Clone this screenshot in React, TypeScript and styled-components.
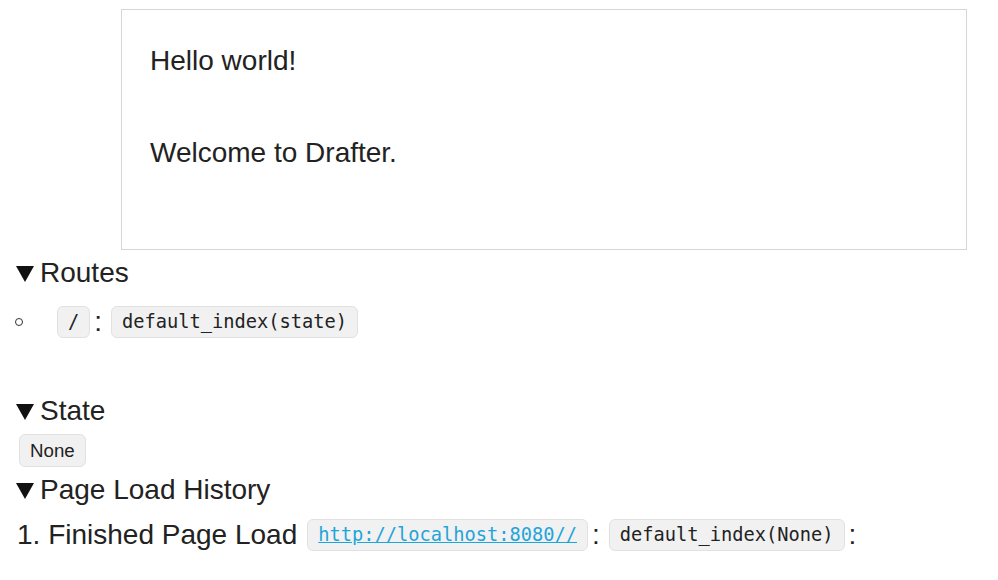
import React from "react";
import styled, { createGlobalStyle } from "styled-components";

const Global = createGlobalStyle`
  html, body { margin: 0; padding: 0; background: #ffffff; }
  body { font-family: "Liberation Sans", Arial, sans-serif; color: #222222; }
`;

const Page = styled.div`
  padding: 9px 31px 0 0;
  display: flex;
  flex-direction: column;
`;

const Frame = styled.div`
  margin-left: 121px;
  height: 241px;
  box-sizing: border-box;
  border: 1px solid #d6d6d6;
  padding: 35px 28px 0 28px;
  display: flex;
  flex-direction: column;
  gap: 60px;
`;

const Para = styled.div`
  font-size: 28px;
  line-height: 32px;
`;

const Summary = styled.div<{ $top: number }>`
  display: flex;
  align-items: center;
  margin-top: ${(p) => p.$top}px;
  margin-left: 16px;
  font-size: 28px;
  line-height: 32px;
  gap: 6px;
`;

const Triangle = styled.span`
  width: 0;
  height: 0;
  border-left: 9px solid transparent;
  border-right: 9px solid transparent;
  border-top: 16px solid #111111;
  margin-top: 2px;
`;

const Row = styled.div<{ $top: number; $left: number }>`
  display: flex;
  align-items: center;
  margin-top: ${(p) => p.$top}px;
  margin-left: ${(p) => p.$left}px;
  font-size: 28px;
  line-height: 32px;
`;

const Bullet = styled.span`
  width: 6px;
  height: 6px;
  border: 1px solid #333333;
  border-radius: 50%;
  margin-right: 34px;
`;

const Code = styled.code`
  font-family: "DejaVu Sans Mono", "Liberation Mono", monospace;
  font-size: 18.7px;
  line-height: 30px;
  background: #f1f1f1;
  border: 1px solid #e1e1e1;
  border-radius: 6px;
  padding: 0 10px;
  color: #222222;
`;

const Plain = styled.span`
  font-family: "Liberation Sans", Arial, sans-serif;
  font-size: 18.7px;
  line-height: 31px;
  background: #f1f1f1;
  border: 1px solid #e1e1e1;
  border-radius: 6px;
  padding: 0 10px;
`;

const Link = styled.a`
  color: #1fa5da;
  text-decoration: underline;
`;

const Colon = styled.span`
  margin: 0 9px 0 4px;
`;

const Label = styled.span`
  margin-right: 10px;
`;

const RouteList = styled.div`
  margin-bottom: 57px;
`;

export default function App() {
  return (
    <>
      <Global />
      <Page>
        <Frame>
          <Para>Hello world!</Para>
          <Para>Welcome to Drafter.</Para>
        </Frame>
        <Summary $top={7}>
          <Triangle />
          Routes
        </Summary>
        <RouteList>
          <Row $top={17} $left={15}>
            <Bullet />
            <Code>/</Code>
            <Colon>:</Colon>
            <Code>default_index(state)</Code>
          </Row>
        </RouteList>
        <Summary $top={0}>
          <Triangle />
          State
        </Summary>
        <Row $top={7} $left={19}>
          <Plain>None</Plain>
        </Row>
        <Summary $top={7}>
          <Triangle />
          Page Load History
        </Summary>
        <Row $top={13} $left={17}>
          <Label>1. Finished Page Load</Label>
          <Code>
            <Link href="#">http://localhost:8080//</Link>
          </Code>
          <Colon>:</Colon>
          <Code>default_index(None)</Code>
          <Colon>:</Colon>
        </Row>
      </Page>
    </>
  );
}
